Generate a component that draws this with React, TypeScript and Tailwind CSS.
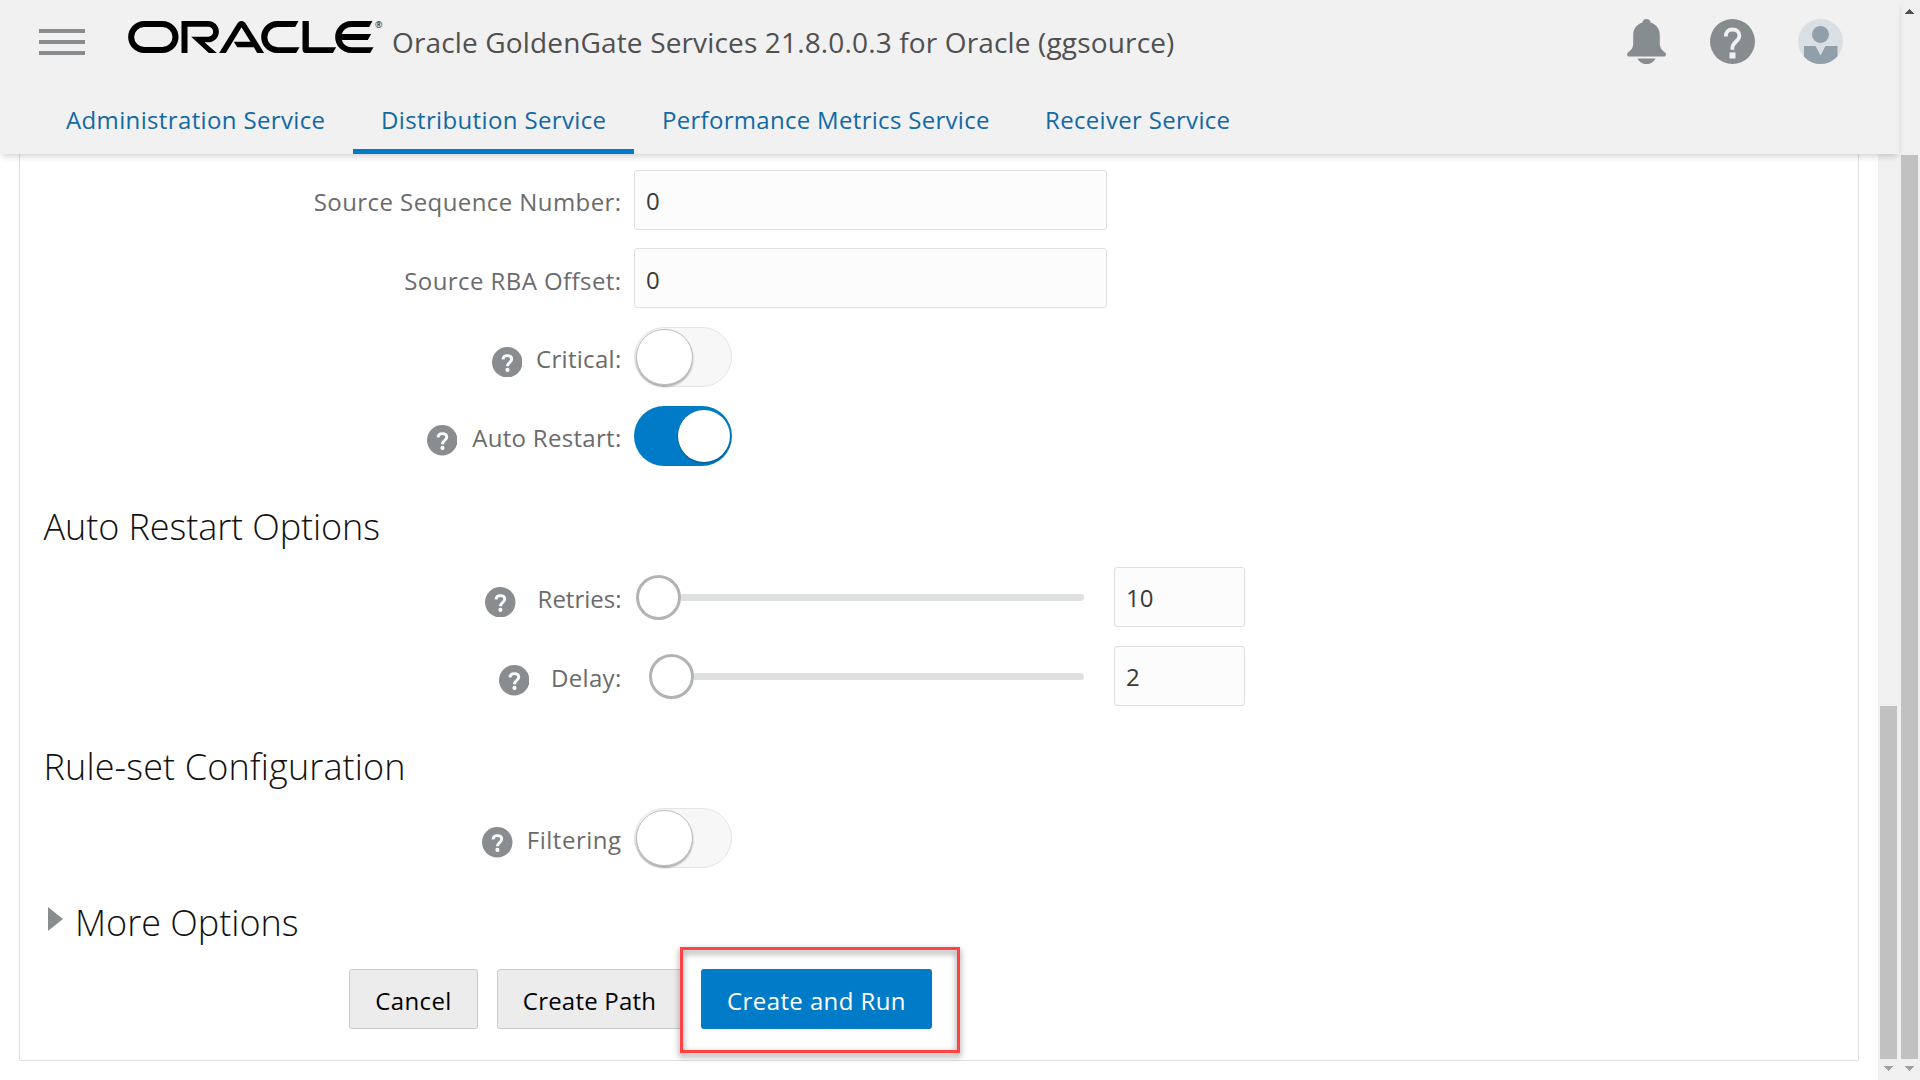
import React, { ReactNode } from "react";

function OracleLogo() {
  return (
    <svg viewBox="24 33 740 96" className="h-8 w-[247px]" fill="#000" aria-label="ORACLE">
      <rect x="33" y="42" width="133" height="78" rx="39" fill="none" stroke="#000" strokeWidth="18" />
      <path d="M184 33H264a32 32 0 0 1 0 64H253L290 129H266L213 80H264a15 15 0 0 0 0-30H202V129H184Z" />
      <path d="M297 129L352 40Q357 33 364 33Q371 33 376 40L432 129H411L401 112H351L341 95H391L364 52L317 129Z" />
      <path d="M535 33L525 51H472a30.500 30.500 0 0 0 0 61H538L528 129H471a48 48 0 0 1 0-96Z" />
      <path d="M547 33H566V112H648L638 129H557Q547 129 547 118Z" />
      <path d="M757 33L747 51H694a31 31 0 0 0-29 21H753L743 90H665a31 31 0 0 0 29 22H760L750 129H693a48 48 0 0 1 0-96Z" />
    </svg>
  );
}

function BellIcon() {
  return (
    <svg viewBox="0 0 39 45" className="h-[45px] w-[39px]" fill="#878c8f">
      <path d="M15.500 3.500C15.500 1.200 17.200 0 19.500 0s4 1.200 4 3.500C29.500 5.500 32.800 10 32.800 16v8c0 5 2 7 5 9.200 1.600 1.300 1.500 2.500.2 4.300H1c-1.300-1.800-1.400-3 .2-4.300C4.200 31 6.200 29 6.200 24v-8c0-6 3.300-10.500 9.300-12.500Z" />
      <path d="M10.500 39.500h18C27 43 23.500 45 19.500 45s-7.500-2-9-5.500Z" />
    </svg>
  );
}

function HelpLarge() {
  return (
    <svg viewBox="0 0 45 45" className="size-[45px]">
      <circle cx="22.500" cy="22.500" r="22.500" fill="#878c8f" />
      <path d="M15.800 17.500c0-4.700 2.600-7 6.600-7 4.300 0 7 2.300 7 6.200 0 5.700-7 6-7 12.300v1.700" fill="none" stroke="#f1f1f1" strokeWidth="3.800" />
      <rect x="19.500" y="33.500" width="6" height="6" fill="#f1f1f1" />
    </svg>
  );
}

function UserIcon() {
  return (
    <svg viewBox="0 0 45 45" className="size-[45px]">
      <circle cx="22.500" cy="22.500" r="22.500" fill="#d9dfe3" />
      <circle cx="22.500" cy="15.500" r="8.500" fill="#919fab" />
      <path d="M6 27h11.500l5 9.500 5-9.500H39.500v10.300A22.500 22.500 0 0 1 6 37.700Z" fill="#919fab" />
    </svg>
  );
}

function HelpIcon() {
  return (
    <svg viewBox="0 0 30 30" className="mt-[19.500px] size-[30.5px] shrink-0 self-start">
      <circle cx="15" cy="15" r="15" fill="#8a8d8f" />
      <path d="M10.800 12.200c.2-2.500 1.800-3.700 4.300-3.700s4.300 1.300 4.300 3.500c0 3.200-4.100 3.200-4.100 6.900" fill="none" stroke="#fff" strokeWidth="2.900" />
      <circle cx="15.200" cy="22.500" r="2" fill="#fff" />
    </svg>
  );
}

function Row({ label, help, gap = "gap-[14px]", track = "tracking-[0.3px]", children }: { label: string; help?: boolean; gap?: string; track?: string; children: ReactNode }) {
  return (
    <div className="flex h-[60px]">
      <div className={"flex w-[602px] shrink-0 justify-end pr-[0.5px] " + gap}>
        {help && <HelpIcon />}
        <span className={"pt-[2.4px] leading-[60px] whitespace-nowrap text-[#6b6b6b] " + track}>{label}</span>
      </div>
      <div className="flex pl-3">{children}</div>
    </div>
  );
}

function Field({ value, width }: { value: string; width: string }) {
  return (
    <div className={"h-[60px] rounded-[3px] border border-[#dfe0e1] bg-[#fcfcfc] pt-[1.4px] pl-[11px] leading-[58px] text-[#3a3a3a] " + width}>{value}</div>
  );
}

function Toggle({ on }: { on?: boolean }) {
  return on ? (
    <div className="flex h-[60px] w-[98px] items-start justify-end rounded-full bg-[#007bc8] pt-1 pr-[2px]">
      <div className="size-[52px] rounded-full bg-white shadow-[0_1px_2px_rgba(0,0,0,0.35)]" />
    </div>
  ) : (
    <div className="flex h-[60px] w-[98px] items-start rounded-full border border-[#e4e4e4] bg-[#f7f7f7] pt-px pl-px">
      <div className="h-[56px] w-[57px] rounded-full border border-[#bdbdbd] bg-white shadow-[0_2px_2px_rgba(0,0,0,0.3)]" />
    </div>
  );
}

function Slider({ inset }: { inset?: boolean }) {
  return (
    <div className={inset ? "flex h-[61px] w-[450px] items-center pl-[15px]" : "flex h-[60px] w-[450px] items-center pl-[2px]"}>
      <div className="size-[45px] shrink-0 rounded-full border-[3px] border-[#b1b3b4] bg-white" />
      <div className="h-[7px] grow rounded-r-[3px] bg-[#dfe1e1]" />
    </div>
  );
}

function Arrow({ up, color }: { up?: boolean; color: string }) {
  return (
    <svg viewBox="0 0 9 5" className="h-[5px] w-[9px]" fill={color} shapeRendering="crispEdges">
      <path d={up ? "M0 5L4.500 0L9 5Z" : "M0 0H9L4.500 5Z"} />
    </svg>
  );
}

const heading = "mt-9 h-[50px] pl-[23.5px] text-[36px] leading-[50px] font-light text-[#111] whitespace-nowrap ";

export default function App() {
  return (
    <div className="flex h-[1080px] w-[1920px] overflow-hidden bg-white font-['Open_Sans',sans-serif] text-[24px] font-normal">
      <div className="flex w-[1899px] flex-col">
        <header className="relative z-10 h-[154px] shrink-0 bg-[#f1f1f1] shadow-[0_4px_7px_-2px_rgba(0,0,0,0.2)]">
          <div className="flex h-[83px] items-center">
            <div className="ml-[39px] flex w-[46px] flex-col gap-[7px]">
              <div className="h-1 bg-[#8a8d8f]" />
              <div className="h-1 bg-[#8a8d8f]" />
              <div className="h-1 bg-[#8a8d8f]" />
            </div>
            <div className="mb-[9px] ml-[43px] flex items-start">
              <OracleLogo />
              <span className="h-2 w-[9px] text-[9px] leading-[8px] font-normal text-black">®</span>
            </div>
            <h1 className="ml-[8px] text-[28px] tracking-[0.15px] whitespace-nowrap text-[#505050]">Oracle GoldenGate Services 21.8.0.0.3 for Oracle (ggsource)</h1>
            <div className="mr-[56px] ml-auto flex items-center">
              <BellIcon />
              <div className="ml-11"><HelpLarge /></div>
              <div className="ml-[43px]"><UserIcon /></div>
            </div>
          </div>
          <nav className="ml-[38px] flex h-[71px] leading-[73px] whitespace-nowrap text-[#1169a6]">
            <a className="w-[315px] pl-7 tracking-[0.36px]">Administration Service</a>
            <a className="h-[71px] w-[281px] border-b-[5px] border-[#007bc8] pl-7 tracking-[0.36px]">Distribution Service</a>
            <a className="w-[383px] pl-7 tracking-[0.3px]">Performance Metrics Service</a>
            <a className="pl-7 tracking-[0.32px]">Receiver Service</a>
          </nav>
        </header>
        <div className="flex grow">
          <main className="w-[1878px] pl-[19px]">
            <div className="h-[907px] w-[1840px] rounded-b-[2px] border border-t-0 border-[#dedfe0] pt-[15.7px]">
              <div className="flex flex-col gap-[18.7px]">
                <Row label="Source Sequence Number:" track="tracking-[0.42px]"><Field value="0" width="w-[473px]" /></Row>
                <Row label="Source RBA Offset:" track="tracking-[0.42px]"><Field value="0" width="w-[473px]" /></Row>
                <Row label="Critical:" help><Toggle /></Row>
                <Row label="Auto Restart:" help gap="gap-[15px]"><Toggle on /></Row>
              </div>
              <h2 className={heading + "tracking-[-0.08px]"}>Auto Restart Options</h2>
              <div className="mt-[15.300px] flex flex-col gap-[18.7px]">
                <Row label="Retries:" help gap="gap-[22px]" track="tracking-[0px]">
                  <Slider />
                  <div className="pl-[30px]"><Field value="10" width="w-[131px]" /></div>
                </Row>
                <Row label="Delay:" help gap="gap-[22px]">
                  <Slider inset />
                  <div className="pl-[30px]"><Field value="2" width="w-[131px]" /></div>
                </Row>
              </div>
              <h2 className={heading + "tracking-[0.13px]"}>Rule-set Configuration</h2>
              <div className="mt-4">
                <Row label="Filtering" help gap="gap-[14px]" track="tracking-[0.5px]"><Toggle /></Row>
              </div>
              <div className="mt-[30px] flex">
                <svg viewBox="0 0 15 24" className="mt-[9px] ml-[28px] h-6 w-[15px]" fill="#8a8d8f"><path d="M0 0L15 12L0 24Z" /></svg>
                <h2 className="h-[50px] pl-3 text-[36px] leading-[50px] font-light text-[#111]">More Options</h2>
              </div>
              <div className="mt-[21px] ml-[329px] flex gap-[19px] leading-[60px] whitespace-nowrap text-black">
                <button className="h-[60px] w-[129px] rounded-[3px] border border-[#c9caca] bg-[#ececec] pt-px tracking-[0.4px]">Cancel</button>
                <button className="h-[60px] w-[185px] rounded-[3px] border border-[#c9caca] bg-[#ececec] pt-px tracking-[0.2px]">Create Path</button>
                <div className="relative">
                  <button className="h-[60px] w-[231px] rounded-[3px] bg-[#007bc8] pt-[2px] tracking-[0.4px] text-white">Create and Run</button>
                  <div className="absolute -top-[22px] -left-[21px] h-[106px] w-[280px] border-[3px] border-[#ff4343] drop-shadow-[0_3px_3px_rgba(0,0,0,0.5)]" />
                </div>
              </div>
            </div>
          </main>
          <div className="flex w-[21px] flex-col items-center bg-[#f0f0f0] pt-[552px]">
            <div className="mr-px mb-[7px] h-[353px] w-[17px] bg-[#c1c1c1]" />
            <Arrow color="#a0a0a0" />
          </div>
        </div>
      </div>
      <div className="flex w-[21px] flex-col items-center bg-[#f0f0f0] pt-[9px]">
        <Arrow up color="#505050" />
        <div className="mt-[141px] mb-[7px] h-[904px] w-[17px] bg-[#c1c1c1]" />
        <Arrow color="#a0a0a0" />
      </div>
    </div>
  );
}
